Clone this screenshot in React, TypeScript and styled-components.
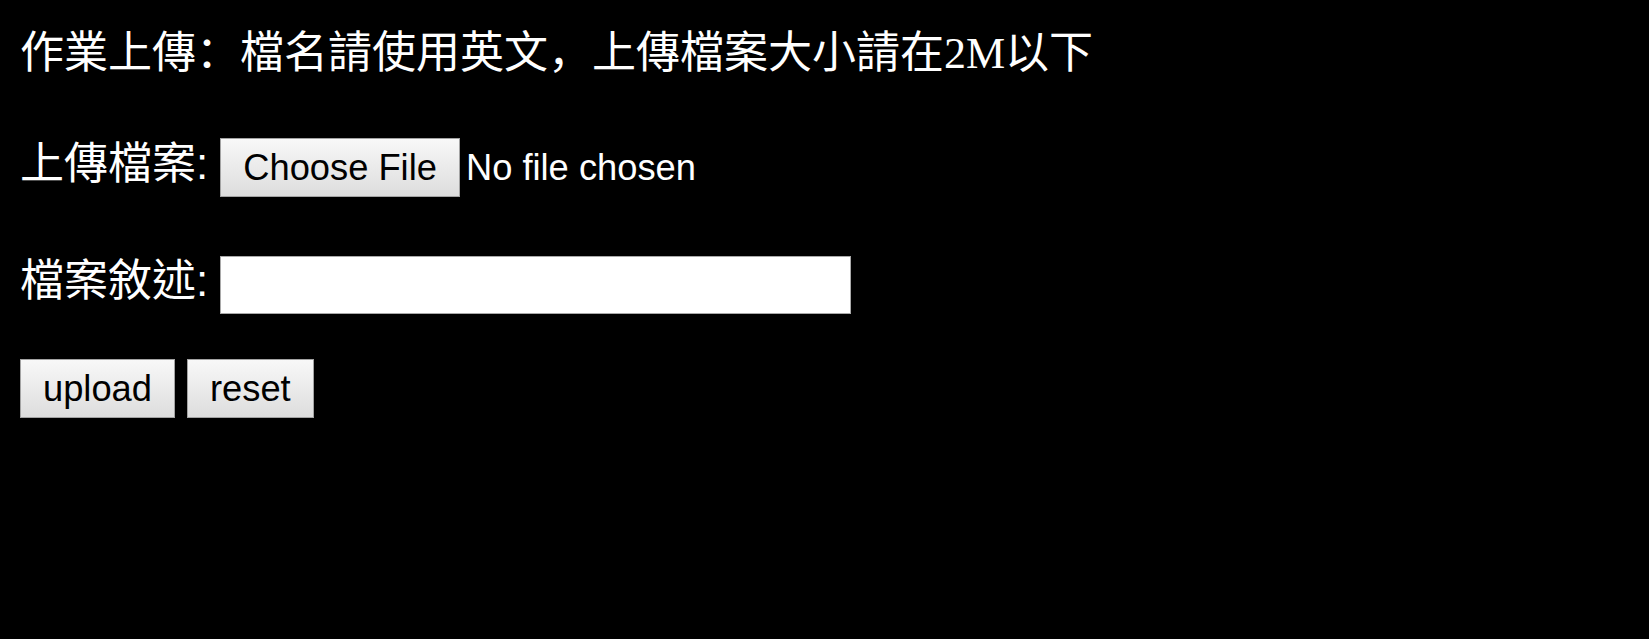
import React from "react";
import styled, { createGlobalStyle } from "styled-components";

const GlobalStyle = createGlobalStyle`
  html, body {
    margin: 0;
    padding: 0;
    background: #000;
  }
  body {
    color: #fff;
  }
`;

const Page = styled.form`
  display: flex;
  flex-direction: column;
  align-items: flex-start;
  padding: 32px 20px 0 20px;
  min-height: 639px;
  box-sizing: border-box;
  background: #000;
`;

const Title = styled.div`
  font-family: "Liberation Serif", "Noto Sans CJK SC", serif;
  font-size: 44px;
  line-height: 44px;
  color: #fff;
  white-space: nowrap;
`;

const Row = styled.div<{ $top: number }>`
  display: flex;
  align-items: center;
  height: 59px;
  margin-top: ${(p) => p.$top}px;
`;

const Label = styled.label`
  font-family: "Liberation Sans", "Noto Sans CJK TC", sans-serif;
  font-size: 44px;
  line-height: 44px;
  padding-bottom: 8px;
  margin-right: 12px;
  color: #fff;
  white-space: nowrap;
`;

const buttonLook = `
  font-family: "Liberation Sans", Arial, sans-serif;
  font-size: 36.3px;
  color: #000;
  height: 59px;
  padding: 0 22px;
  border: 1px solid #a3a3a3;
  border-radius: 0;
  background: linear-gradient(#f8f8f8, #dddddd);
  box-sizing: border-box;
  cursor: pointer;
`;

const FileInput = styled.input`
  font-family: "Liberation Sans", Arial, sans-serif;
  font-size: 36.3px;
  color: #fff;
  height: 59px;
  &::file-selector-button {
    ${buttonLook}
    margin-right: 6px;
  }
`;

const TextInput = styled.input`
  width: 631px;
  height: 58px;
  box-sizing: border-box;
  border: 1px solid #a9a9a9;
  background: #fff;
  font-family: "Liberation Sans", Arial, sans-serif;
  font-size: 36.3px;
  padding: 0 6px;
  outline: none;
`;

const Buttons = styled.div`
  display: flex;
  gap: 12px;
  margin-top: 45px;
`;

const Button = styled.button`
  ${buttonLook}
`;

export default function App() {
  return (
    <>
      <GlobalStyle />
      <Page onSubmit={(e) => e.preventDefault()}>
        <Title>作業上傳：檔名請使用英文，上傳檔案大小請在2M以下</Title>
        <Row $top={62}>
          <Label htmlFor="upfile">上傳檔案:</Label>
          <FileInput id="upfile" type="file" />
        </Row>
        <Row $top={58}>
          <Label htmlFor="desc">檔案敘述:</Label>
          <TextInput id="desc" type="text" />
        </Row>
        <Buttons>
          <Button type="submit">upload</Button>
          <Button type="reset">reset</Button>
        </Buttons>
      </Page>
    </>
  );
}
